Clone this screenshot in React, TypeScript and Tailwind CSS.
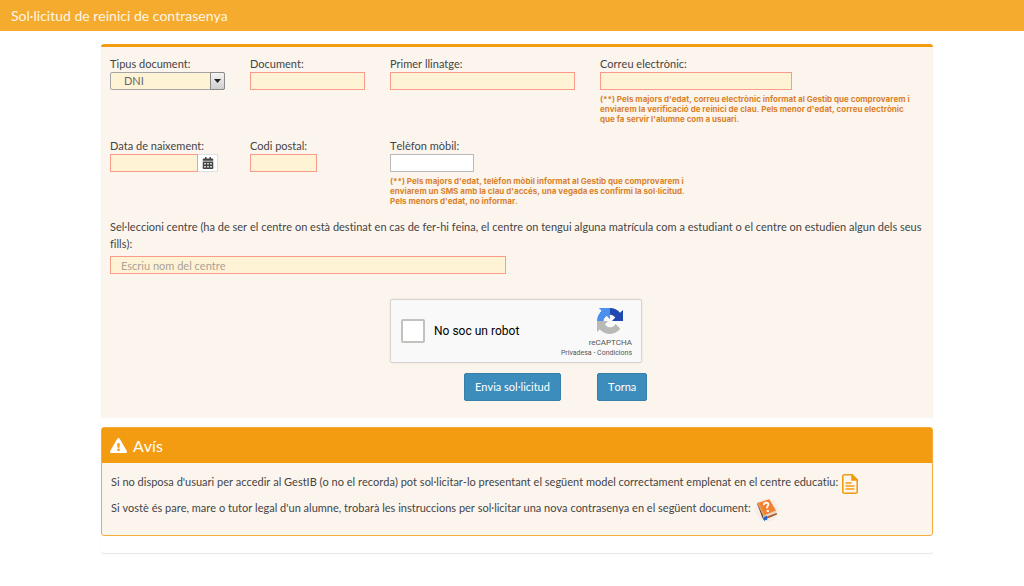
import type { ReactNode } from "react";
import { FaCalendarAlt, FaExclamationTriangle } from "react-icons/fa";

interface FieldProps {
  id: string;
  label: string;
  children: ReactNode;
  note?: string;
}

const REQUIRED = "block h-[18px] border border-[#fa9a88] bg-[#fff3d6] px-[10px] text-[11px] outline-none";
const BUTTON = "h-7 rounded-[2px] border border-[#367fa9] bg-[#3c8dbc] px-[10px] leading-4";

function Field({ id, label, children, note }: FieldProps) {
  return (
    <div>
      <label htmlFor={id} className="block h-4 leading-4">
        {label}
      </label>
      {children}
      {note && (
        <p className="mt-1 max-w-[316px] font-[Inter,Arial,sans-serif] text-[8px] leading-[10px] font-bold text-[#d9822b]">
          {note}
        </p>
      )}
    </div>
  );
}

function RecaptchaLogo() {
  return (
    <svg viewBox="0 0 64 64" className="size-[26px]" aria-hidden="true">
      <path
        fill="#1f49b0"
        d="M64 31.955l-.033-1.37V4.687l-7.16 7.16C50.948 4.674 42.033.093 32.05.093c-10.4 0-19.622 4.96-25.458 12.64l11.736 11.86a15.55 15.55 0 0 1 4.754-5.334c2.05-1.6 4.952-2.906 8.968-2.906.485 0 .86.057 1.135.163 4.976.393 9.288 3.14 11.828 7.124l-8.307 8.307L64 31.953"
      />
      <path
        fill="#4a90ee"
        d="M31.862.094l-1.37.033H4.594l7.16 7.16C4.58 13.147 0 22.06 0 32.046c0 10.4 4.96 19.622 12.64 25.458L24.5 45.768a15.55 15.55 0 0 1-5.334-4.754c-1.6-2.05-2.906-4.952-2.906-8.968 0-.485.057-.86.163-1.135.393-4.976 3.14-9.288 7.124-11.828l8.307 8.307L31.86.095"
      />
      <path
        fill="#b9b9b6"
        d="M.001 32.045l.033 1.37v25.898l7.16-7.16c5.86 7.173 14.774 11.754 24.76 11.754 10.4 0 19.622-4.96 25.458-12.64l-11.736-11.86a15.55 15.55 0 0 1-4.754 5.334c-2.05 1.6-4.952 2.906-8.968 2.906-.485 0-.86-.057-1.135-.163-4.976-.393-9.288-3.14-11.828-7.124l8.307-8.307c-10.522.04-22.4.066-27.295-.005"
      />
    </svg>
  );
}

function FileIcon() {
  return (
    <svg viewBox="0 0 16 20" className="h-5 w-4" fill="none" stroke="#f39c12" strokeWidth="1.6" aria-hidden="true">
      <path d="M10 .8H2.300A1.500 1.500 0 0 0 .8 2.300v15.400a1.500 1.500 0 0 0 1.500 1.500h11.400a1.500 1.500 0 0 0 1.500-1.500V6z" />
      <path d="M10 .8V6h5.200z" fill="#f39c12" />
      <path d="M3.600 9h6M3.600 12h8.800M3.600 15h8.800" />
    </svg>
  );
}

function HelpBook() {
  return (
    <svg viewBox="0 0 24 24" className="size-6" aria-hidden="true">
      <circle cx="12" cy="12" r="11.500" fill="#f6eee6" />
      <path d="M2 5.500 3.400 4.800 8.400 17.600 7.600 20.500Z" fill="#6d4a3c" />
      <path d="M8.200 17.400 20.800 12.600 21.800 15.600 9 20.800Z" fill="#e4d6c8" />
      <path d="M7.600 20.200 21.600 15 22 16.600 8.600 22Z" fill="#a9552a" />
      <path d="M2.200 5 14.400 1.200 21 12.600 8.200 17.800Z" fill="#f5812f" />
      <path d="M2.200 5 4 4.400 9.800 17.200 8.200 17.800Z" fill="#e0a060" />
      <path d="M9 7C8.600 4.600 12.600 3.800 13.300 5.900 13.900 7.800 11.500 8.300 12.100 10.300" fill="none" stroke="#fff" strokeWidth="1.900" />
      <circle cx="12.800" cy="12.900" r="1.200" fill="#fff" />
      <path d="M8.400 19 12 17.800 12.200 22.300 10.600 21.700 9.200 23.200Z" fill="#2467c4" />
    </svg>
  );
}

export default function App() {
  return (
    <div className="bg-white font-[Lato,sans-serif] text-[11px] text-[#444] [font-kerning:none] [font-variant-ligatures:none]">
      <header className="flex h-[31px] items-center bg-[#f5ab2e] px-[11px]">
        <h1 className="text-[14px] leading-5 text-[#fff6e4]">Sol·licitud de reinici de contrasenya</h1>
      </header>

      <main className="mt-[13px] mr-[91px] mb-8 ml-[101px] rounded-[3px] border-t-[3px] border-[#f39c12] pb-[17px] shadow-[0_1px_1px_rgba(0,0,0,0.1)]">
        <form className="bg-[#fcf5ee] px-[9px] pt-[9px] pb-[17px]" onSubmit={(e) => e.preventDefault()}>
          <div className="grid grid-cols-[70fr_70fr_105fr_162fr]">
            <Field id="doc-type" label="Tipus document:">
              <div className="relative w-[115px]">
                <select
                  id="doc-type"
                  className="block h-[18px] w-full appearance-none rounded-[2px] border border-[#a5a5a5] bg-[#fff3d6] pr-5 pl-[13px] text-[11px] leading-4 text-[#666] outline-none"
                >
                  <option>DNI</option>
                  <option>NIE</option>
                  <option>Passaport</option>
                </select>
                <span className="pointer-events-none absolute inset-y-0 right-0 flex w-[15px] items-center justify-center rounded-r-[2px] border border-[#8a8a8a] bg-linear-to-b from-[#f4f4f4] to-[#cfcfcf]">
                  <svg viewBox="0 0 7 4" className="h-1 w-[7px]" aria-hidden="true">
                    <path d="M0 0h7L3.500 4z" fill="#222" />
                  </svg>
                </span>
              </div>
            </Field>
            <Field id="document" label="Document:">
              <input id="document" type="text" className={`${REQUIRED} w-[115px]`} />
            </Field>
            <Field id="surname" label="Primer llinatge:">
              <input id="surname" type="text" className={`${REQUIRED} w-[185px]`} />
            </Field>
            <Field
              id="email"
              label="Correu electrònic:"
              note="(**) Pels majors d'edat, correu electrònic informat al Gestib que comprovarem i enviarem la verificació de reinici de clau. Pels menor d'edat, correu electrònic que fa servir l'alumne com a usuari."
            >
              <input id="email" type="email" className={`${REQUIRED} w-[192px]`} />
            </Field>
          </div>

          <div className="mt-[14px] grid grid-cols-[70fr_70fr_267fr]">
            <Field id="birth" label="Data de naixement:">
              <div className="flex">
                <input id="birth" type="text" className={`${REQUIRED} w-[88px]`} />
                <button
                  type="button"
                  aria-label="Obre el calendari"
                  className="flex h-[18px] w-5 items-center justify-center border border-l-0 border-[#dde1e6] bg-white"
                >
                  <FaCalendarAlt className="size-3 text-[#444]" />
                </button>
              </div>
            </Field>
            <Field id="postcode" label="Codi postal:">
              <input id="postcode" type="text" className={`${REQUIRED} w-[67px]`} />
            </Field>
            <div className="max-w-[308px]">
              <Field
                id="phone"
                label="Telèfon mòbil:"
                note="(**) Pels majors d'edat, telèfon mòbil informat al Gestib que comprovarem i enviarem un SMS amb la clau d'accés, una vegada es confirmi la sol·licitud. Pels menors d'edat, no informar."
              >
                <input
                  id="phone"
                  type="tel"
                  className="block h-[18px] w-[84px] border border-[#b9b9b9] bg-white px-[10px] outline-none"
                />
              </Field>
            </div>
          </div>

          <label htmlFor="school" className="mt-3 block leading-[17px]">
            Sel·leccioni centre (ha de ser el centre on està destinat en cas de fer-hi feina, el centre on tengui alguna
            matrícula com a estudiant o el centre on estudien algun dels seus fills):
          </label>
          <input
            id="school"
            type="text"
            placeholder="Escriu nom del centre"
            className={`${REQUIRED} mt-1 w-[396px] max-w-full placeholder:text-[#aaa198]`}
          />

          <div className="mt-[25px] ml-[280px] flex h-[64px] w-[252px] items-center justify-between rounded-[2px] border border-[#d6d3d0] bg-[#f9f9f9] pr-[9px] pl-[10px] font-[Roboto,sans-serif] shadow-[0_0_3px_rgba(0,0,0,0.08)]">
            <label className="flex items-center gap-[9px] text-[12px] text-black">
              <input
                type="checkbox"
                className="size-6 appearance-none rounded-[2px] border-2 border-[#c3c1be] bg-white"
              />
              No soc un robot
            </label>
            <div className="flex flex-col items-end pt-1 text-[#555]">
              <span className="mr-[9px]">
                <RecaptchaLogo />
              </span>
              <span className="mt-1 text-[8px] leading-[10px]">reCAPTCHA</span>
              <span className="text-[7px] leading-[10px]">
                <a href="#privadesa">Privadesa</a> - <a href="#condicions">Condicions</a>
              </span>
            </div>
          </div>

          <div className="mt-[10px] ml-[354px] flex gap-9 text-white">
            <button type="submit" className={BUTTON}>
              Envia sol·licitud
            </button>
            <button type="button" className={BUTTON}>
              Torna
            </button>
          </div>
        </form>

        <section className="mt-[9px] rounded-[3px] border border-[#f5ab3a] bg-[#fcf5ee]">
          <h2 className="flex h-[35px] items-center gap-[6px] bg-[#f39c12] px-2 text-[16px] text-white">
            <FaExclamationTriangle className="size-[17px]" />
            Avís
          </h2>
          <div className="px-[9px] pt-[7px] pb-[13px] leading-6">
            <p className="flex h-[26px] gap-1">
              Si no disposa d'usuari per accedir al GestIB (o no el recorda) pot sol·licitar-lo presentant el següent
              model correctament emplenat en el centre educatiu:
              <a href="#model" aria-label="Model de sol·licitud" className="pt-1">
                <FileIcon />
              </a>
            </p>
            <p className="flex h-[26px] gap-1">
              Si vostè és pare, mare o tutor legal d'un alumne, trobarà les instruccions per sol·licitar una nova
              contrasenya en el següent document:
              <a href="#instruccions" aria-label="Instruccions" className="self-end">
                <HelpBook />
              </a>
            </p>
          </div>
        </section>
      </main>
    </div>
  );
}
